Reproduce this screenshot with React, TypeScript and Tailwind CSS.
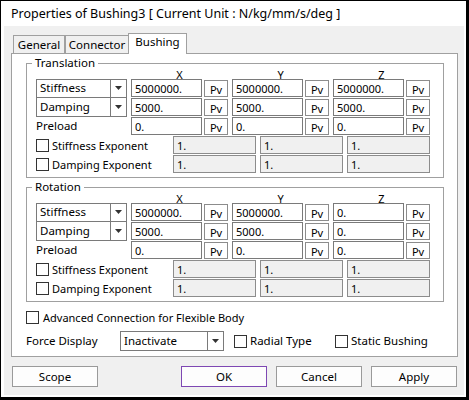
import React from 'react';

type Row = { mode: string; values: string[] };

const translation: Row[] = [
  { mode: 'Stiffness', values: ['5000000.', '5000000.', '5000000.'] },
  { mode: 'Damping', values: ['5000.', '5000.', '5000.'] },
];

const rotation: Row[] = [
  { mode: 'Stiffness', values: ['5000000.', '5000000.', '0.'] },
  { mode: 'Damping', values: ['5000.', '5000.', '0.'] },
];

const Arrow = () => (
  <svg width="7" height="4" viewBox="0 0 7 4">
    <path d="M0 0h7L3.5 4z" fill="#333" />
  </svg>
);

const Combo = ({ label, className }: { label: string; className: string }) => (
  <div className={`flex border border-[#7a7a7a] bg-white ${className}`}>
    <div className="flex flex-1 items-center pl-[3px] text-[11.5px] leading-none">{label}</div>
    <div className="flex w-[16px] items-center justify-center border-l border-[#7a7a7a]">
      <Arrow />
    </div>
  </div>
);

const Pv = () => (
  <div className="flex h-[17px] w-[24px] items-end justify-center border border-[#8c8c8c] bg-white pb-[1px] text-[11px] leading-none">
    Pv
  </div>
);

const ValueCell = ({ value }: { value: string }) => (
  <div className="flex w-[97px] items-center gap-[2px]">
    <div className="flex h-[18px] w-[71px] items-center border border-[#7a7a7a] bg-white pl-[3px] text-[11px] leading-none">
      {value}
    </div>
    <Pv />
  </div>
);

const Check = () => <div className="h-[13px] w-[13px] shrink-0 border border-[#333] bg-white" />;

const Exponent = ({ label }: { label: string }) => (
  <div className="flex h-[18px] items-center">
    <div className="flex w-[137px] items-center gap-[3px]">
      <Check />
      <span className="text-[11px] leading-none">{label}</span>
    </div>
    <div className="flex gap-[4px]">
      {[0, 1, 2].map((i) => (
        <div
          key={i}
          className="flex h-[18px] w-[83px] items-center border border-[#8c8c8c] bg-[#f0f0f0] pl-[3px] text-[11px] leading-none"
        >
          1.
        </div>
      ))}
    </div>
  </div>
);

const Group = ({ title, rows }: { title: string; rows: Row[] }) => (
  <fieldset className="w-[418px] border border-[#a0a0a0] pb-[4px] pl-[9px]">
    <legend className="-ml-[4px] h-[14px] px-[3px] text-[11.5px] leading-[14px]">{title}</legend>
    <div className="flex h-[9px] text-[11px] leading-[9px]">
      <div className="w-[95px]" />
      <div className="flex gap-[4px]">
        {['X', 'Y', 'Z'].map((a) => (
          <div key={a} className="w-[97px] text-center">
            {a}
          </div>
        ))}
      </div>
    </div>
    <div className="flex flex-col gap-[1px]">
      {rows.map((r, i) => (
        <div key={r.mode} className="flex h-[18px] items-center">
          <div className="w-[95px]">
            <Combo
              label={r.mode}
              className={i === 0 ? 'h-[19px] w-[91px]' : '-mt-[1px] h-[20px] w-[91px]'}
            />
          </div>
          <div className="flex gap-[4px]">
            {r.values.map((v, j) => (
              <ValueCell key={j} value={v} />
            ))}
          </div>
        </div>
      ))}
      <div className="flex h-[18px] items-center">
        <div className="w-[95px] text-[11.5px] leading-none">Preload</div>
        <div className="flex gap-[4px]">
          {[0, 1, 2].map((j) => (
            <ValueCell key={j} value="0." />
          ))}
        </div>
      </div>
      <Exponent label="Stiffness Exponent" />
      <Exponent label="Damping Exponent" />
    </div>
  </fieldset>
);

const Tab = ({ label, active }: { label: string; active?: boolean }) =>
  active ? (
    <div className="relative z-10 -mb-px flex h-[21px] w-[59px] items-start justify-center border border-b-0 border-[#a0a0a0] bg-white pt-[2px] text-[11.5px] leading-none">
      {label}
    </div>
  ) : (
    <div className="flex h-[18px] items-center justify-center border border-b-0 border-[#a0a0a0] bg-[#f0f0f0] text-[11.5px] leading-none">
      {label}
    </div>
  );

export default function App() {
  return (
    <div className="h-[400px] w-[469px] border-t border-r-[3px] border-b-[3px] border-l border-black bg-white pr-[2px] pb-[2px] pl-[3px] font-['Noto_Sans',sans-serif] text-black">
      <div className="flex h-[25px] items-center pl-[7px] pt-[2px] text-[12.5px] leading-none">
        Properties of Bushing3 [ Current Unit : N/kg/mm/s/deg ]
      </div>
      <div className="flex h-[369px] flex-col bg-[#f0f0f0] pt-[7px]">
        <div className="flex items-end pl-[9px]">
          <div className="w-[52px]">
            <Tab label="General" />
          </div>
          <div className="w-[64px]">
            <Tab label="Connector" />
          </div>
          <div className="-ml-px">
            <Tab label="Bushing" active />
          </div>
        </div>
        <div className="ml-[7px] flex h-[304px] w-[447px] flex-col border border-[#a0a0a0] bg-white pt-[2px] pl-[14px]">
          <Group title="Translation" rows={translation} />
          <div className="mt-[2px]">
            <Group title="Rotation" rows={rotation} />
          </div>
          <div className="mt-[7px] flex h-[16px] items-center gap-[4px]">
            <Check />
            <span className="text-[11px] leading-none">Advanced Connection for Flexible Body</span>
          </div>
          <div className="mt-[6px] flex h-[20px] items-center text-[11.5px] leading-none">
            <div className="w-[94px]">Force Display</div>
            <Combo label="Inactivate" className="h-[20px] w-[104px]" />
            <div className="ml-[10px] flex w-[101px] items-center gap-[3px]">
              <Check />
              <span>Radial Type</span>
            </div>
            <div className="flex items-center gap-[3px]">
              <Check />
              <span>Static Bushing</span>
            </div>
          </div>
        </div>
        <div className="mt-[9px] flex justify-between pr-[7px] pl-[8px] text-[11.5px] leading-none">
          <div className="flex h-[21px] w-[86px] items-center justify-center border border-[#9a9a9a] bg-[#fdfdfd]">
            Scope
          </div>
          <div className="flex gap-[9px]">
            <div className="flex h-[21px] w-[86px] items-center justify-center border border-[#7e48b3] bg-[#fdfdfd]">
              OK
            </div>
            <div className="flex h-[21px] w-[86px] items-center justify-center border border-[#9a9a9a] bg-[#fdfdfd]">
              Cancel
            </div>
            <div className="flex h-[21px] w-[86px] items-center justify-center border border-[#9a9a9a] bg-[#fdfdfd]">
              Apply
            </div>
          </div>
        </div>
      </div>
    </div>
  );
}
